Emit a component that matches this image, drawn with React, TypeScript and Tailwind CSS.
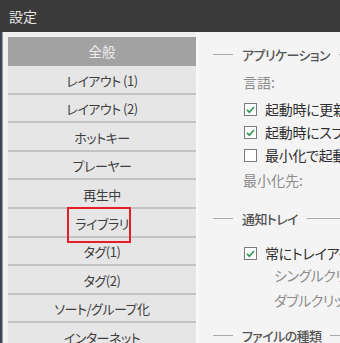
import React from 'react';

// 設定ウィンドウ — 左にカテゴリ一覧、右に「全般」ページの中身

const CATEGORIES = [
  'レイアウト (1)',
  'レイアウト (2)',
  'ホットキー',
  'プレーヤー',
  '再生中',
  'ライブラリ',
  'タグ(1)',
  'タグ(2)',
  'ソート/グループ化',
  'インターネット',
];

const FONT = "font-['Noto_Sans_CJK_JP','Noto_Sans',sans-serif] [font-feature-settings:'palt']";

function CheckBox({ checked }: { checked: boolean }) {
  return (
    <span className="w-[13px] h-[13px] shrink-0 border border-[#7c7c7c] bg-white flex items-center justify-center">
      {checked && (
        <svg width="11" height="11" viewBox="0 0 11 11">
          <path d="M2 5.8 L4.4 8.2 L9 3" fill="none" stroke="#2f9c52" strokeWidth="1.7" />
        </svg>
      )}
    </span>
  );
}

function GroupHeader({ title, className }: { title: string; className: string }) {
  return (
    <div className={`h-[20px] flex items-center ${className}`}>
      <span className="w-[20px] h-px bg-[#a9a9a9] shrink-0" />
      <span className="mx-[9px] text-[13px] tracking-[-0.6px] font-medium text-[#545454] whitespace-nowrap">{title}</span>
      <span className="flex-1 h-px bg-[#a9a9a9] min-w-[20px]" />
    </div>
  );
}

function CheckRow({ checked, label, className }: { checked: boolean; label: string; className: string }) {
  return (
    <div className={`h-[20px] flex items-center pl-[31px] gap-[8px] ${className}`}>
      <CheckBox checked={checked} />
      <span className="text-[14px] tracking-[-0.3px] text-[#2e2e2e] whitespace-nowrap">{label}</span>
    </div>
  );
}

export default function App() {
  return (
    <div className={`w-[340px] h-[343px] overflow-hidden bg-[#f0f0f0] flex flex-col ${FONT}`}>
      {/* タイトルバー */}
      <div className="h-[32px] shrink-0 bg-[#3a3a3a] flex items-center pl-[9px]">
        <span className="text-[14px] text-[#e6e6e6]">設定</span>
      </div>

      <div className="flex flex-1 min-h-0">
        {/* 背後のデスクトップ + 枠 */}
        <div className="w-[2px] shrink-0 bg-[#3d4654]" />
        <div className="w-[1px] shrink-0 bg-[#9a9a9a]" />

        {/* カテゴリ一覧 */}
        <div className="w-[193px] shrink-0 pl-[5px] pt-[5px] bg-[#efefef]">
          <div className="bg-[#e6e6e6] h-full">
            <div className="h-[29px] bg-[#a2a2a2] flex items-center justify-center text-[13.5px] text-[#ededed]">
              全般
            </div>
            {CATEGORIES.map((name) => (
              <div
                key={name}
                className="relative h-[28.6px] pt-[2px] border-b-2 border-[#c3c3c3] flex items-center justify-center text-[13px] tracking-[-0.5px] text-[#3e3e3e] whitespace-nowrap"
              >
                {name}
                {name === 'ライブラリ' && (
                  <span className="absolute left-[59px] top-[-2px] w-[64px] h-[36px] border-2 border-[#e3202a]" />
                )}
              </div>
            ))}
          </div>
        </div>

        {/* 全般ページ */}
        <div className="flex-1 min-w-0 overflow-hidden bg-[#f4f4f4] border-l-[3px] border-[#f8f8f8] pl-[14px] flex flex-col">
          <GroupHeader title="アプリケーション" className="mt-[13px]" />
          <div className="h-[20px] mt-[7.5px] flex items-center pl-[30px] text-[14px] text-[#8c8c8c]">言語:</div>
          <CheckRow checked label="起動時に更新をチェック" className="mt-[7.5px]" />
          <CheckRow checked label="起動時にスプラッシュを表示" className="mt-[3px]" />
          <CheckRow checked={false} label="最小化で起動" className="mt-[3px]" />
          <div className="h-[20px] mt-[5px] flex items-center pl-[30px] text-[14px] text-[#8c8c8c] whitespace-nowrap">最小化先:</div>

          <GroupHeader title="通知トレイ" className="mt-[18px]" />
          <CheckRow checked label="常にトレイアイコンを表示" className="mt-[15px]" />
          <div className="h-[20px] mt-[2px] flex items-center pl-[61px] text-[14px] tracking-[-0.5px] text-[#8c8c8c] whitespace-nowrap">シングルクリック:</div>
          <div className="h-[20px] mt-[5px] flex items-center pl-[61px] text-[14px] tracking-[-0.5px] text-[#8c8c8c] whitespace-nowrap">ダブルクリック:</div>

          <GroupHeader title="ファイルの種類" className="mt-[16px]" />
        </div>
      </div>
    </div>
  );
}
